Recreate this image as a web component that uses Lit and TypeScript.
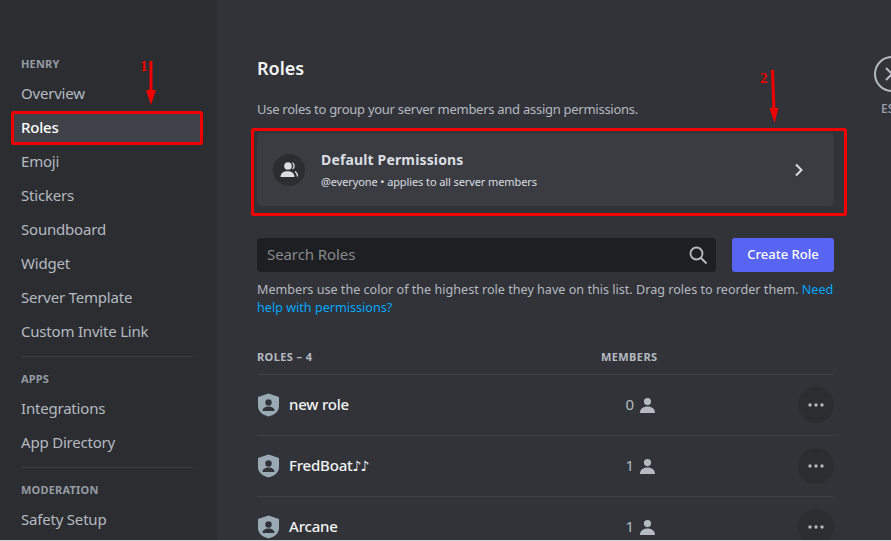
import { LitElement, html, css, svg } from 'lit';
import { customElement } from 'lit/decorators.js';

type NavGroup = { title: string; items: string[] };

const groups: NavGroup[] = [
  { title: 'HENRY', items: ['Overview', 'Roles', 'Emoji', 'Stickers', 'Soundboard', 'Widget', 'Server Template', 'Custom Invite Link'] },
  { title: 'APPS', items: ['Integrations', 'App Directory'] },
  { title: 'MODERATION', items: ['Safety Setup'] },
];

const roles = [
  { name: 'new role', notes: '', count: 0 },
  { name: 'FredBoat', notes: '♪♪', count: 1 },
  { name: 'Arcane', notes: '', count: 1 },
];

const personIcon = svg`<path fill="currentColor" d="M12 3a4.300 4.300 0 1 1 0 8.600A4.300 4.300 0 0 1 12 3ZM3 21c0-5 3.600-7.800 9-7.800s9 2.800 9 7.800Z"/>`;

@customElement('app-root')
export class AppRoot extends LitElement {
  static styles = css`
    :host {
      display: block;
      width: 891px;
      height: 541px;
      position: relative;
      overflow: hidden;
      font-family: 'Noto Sans', 'Open Sans', sans-serif;
      background: #313338;
    }
    .page {
      display: flex;
      height: 540px;
      overflow: hidden;
    }
    .edge {
      height: 1px;
      background: #d4d5d6;
    }
    .sidebar {
      width: 217px;
      flex: none;
      box-sizing: border-box;
      padding: 54px 16px 0 13px;
      background: #2b2d31;
    }
    .group-title {
      height: 20px;
      line-height: 20px;
      padding-left: 8px;
      font-size: 11px;
      font-weight: 700;
      letter-spacing: 0.2px;
      color: #949ba4;
    }
    .nav-item {
      height: 32px;
      line-height: 32px;
      margin-bottom: 2px;
      padding-left: 8px;
      border-radius: 4px;
      font-size: 15px;
      letter-spacing: -0.2px;
      color: #b5bac1;
    }
    .group-title + .nav-item {
      margin-top: 3px;
    }
    .nav-item.active {
      background: #404249;
      color: #fff;
      font-weight: 500;
    }
    .sep {
      height: 1px;
      margin: 9px 8px 12px 8px;
      background: #3c3e44;
    }
    .content {
      width: 577px;
      flex: none;
      margin-left: 40px;
      padding-top: 56px;
    }
    h1 {
      margin: 0;
      height: 25px;
      line-height: 25px;
      font-size: 18px;
      font-weight: 600;
      color: #f2f3f5;
    }
    .desc {
      margin: 18px 0 0;
      height: 20px;
      line-height: 20px;
      font-size: 13px;
      letter-spacing: -0.27px;
      color: #b5bac1;
    }
    .card {
      display: flex;
      align-items: center;
      height: 73px;
      margin-top: 14px;
      padding: 0 16px;
      box-sizing: border-box;
      border-radius: 4px;
      background: #3a3c41;
    }
    .card-icon {
      width: 32px;
      height: 32px;
      border-radius: 50%;
      background: #2b2d31;
      display: flex;
      align-items: center;
      justify-content: center;
      color: #dbdee1;
      margin-right: 16px;
    }
    .card-text {
      flex: 1;
    }
    .card-title {
      height: 20px;
      line-height: 20px;
      font-size: 14px;
      font-weight: 700;
      letter-spacing: 0.15px;
      color: #dbdee1;
    }
    .card-sub {
      margin-top: 4px;
      height: 16px;
      line-height: 16px;
      font-size: 11px;
      letter-spacing: -0.1px;
      color: #dbdee1;
    }
    .chevron {
      color: #dbdee1;
      display: block;
      margin-right: 14px;
    }
    .search-row {
      display: flex;
      gap: 16px;
      margin-top: 32px;
    }
    .search {
      flex: 1;
      height: 34px;
      display: flex;
      align-items: center;
      justify-content: space-between;
      padding: 0 8px 0 10px;
      border-radius: 4px;
      background: #1e1f22;
      font-size: 15px;
      letter-spacing: -0.08px;
      color: #87898c;
    }
    .search span {
      margin-top: -2px;
    }
    .search svg {
      color: #b5bac1;
      display: block;
    }
    .create {
      width: 102px;
      height: 34px;
      line-height: 33px;
      text-align: center;
      border-radius: 3px;
      background: #5865f2;
      color: #fff;
      font-size: 13px;
      font-weight: 500;
    }
    .help {
      margin: 9px 0 0;
      line-height: 18px;
      font-size: 12.6px;
      color: #b5bac1;
    }
    .help a {
      color: #00a8fc;
      text-decoration: none;
    }
    .table-head {
      display: flex;
      align-items: center;
      height: 20px;
      margin-top: 29px;
      padding-bottom: 8px;
      border-bottom: 1px solid #3f4147;
      font-size: 11px;
      font-weight: 700;
      letter-spacing: 0.4px;
      color: #b5bac1;
    }
    .table-head .name,
    .row .name {
      flex: 1;
    }
    .table-head .members {
      width: 57px;
      margin-right: 176px;
    }
    .row {
      display: flex;
      align-items: center;
      height: 60px;
      border-bottom: 1px solid #3f4147;
    }
    .row .name {
      display: flex;
      align-items: center;
      gap: 9px;
      font-size: 15px;
      font-weight: 500;
      letter-spacing: -0.2px;
      color: #f2f3f5;
    }
    .role-label {
      margin-top: -2px;
    }
    .notes {
      font-family: 'DejaVu Sans', sans-serif;
      font-size: 14px;
      letter-spacing: -1px;
      font-weight: 400;
    }
    .shield {
      display: block;
      width: 23px;
      height: 24px;
      color: #99aab5;
    }
    .count {
      display: flex;
      align-items: center;
      justify-content: flex-end;
      gap: 6px;
      width: 58px;
      margin-right: 143px;
      font-size: 15px;
      color: #b5bac1;
    }
    .count span {
      margin-top: -2px;
    }
    .count svg {
      display: block;
      color: #b5bac1;
    }
    .more {
      width: 36px;
      height: 36px;
      flex: none;
      border-radius: 50%;
      background: #2b2d31;
      display: flex;
      align-items: center;
      justify-content: center;
      color: #b5bac1;
    }
    .tools {
      flex: none;
      margin-left: 40px;
      padding-top: 56px;
      width: 36px;
    }
    .close {
      width: 32px;
      height: 32px;
      border: 2px solid #b5bac1;
      border-radius: 50%;
      color: #b5bac1;
      display: flex;
      align-items: center;
      justify-content: center;
    }
    .esc {
      margin-top: 9px;
      padding-left: 7px;
      font-size: 12px;
      line-height: 15px;
      font-weight: 600;
      color: #949ba4;
    }
    .marks {
      position: absolute;
      left: 0;
      top: 0;
      pointer-events: none;
    }
    .marks text {
      font-family: 'Liberation Serif', serif;
      font-size: 15px;
      font-weight: 700;
      fill: #f00000;
    }
  `;

  renderNav() {
    return groups.map((group, i) => html`
      ${i > 0 ? html`<div class="sep"></div>` : ''}
      <div class="group-title">${group.title}</div>
      ${group.items.map(item => html`<div class="nav-item ${item === 'Roles' ? 'active' : ''}">${item}</div>`)}
    `);
  }

  renderRow(role: { name: string; notes: string; count: number }) {
    return html`
      <div class="row">
        <div class="name">
          <svg class="shield" viewBox="0 0 23 24">
            <path fill="currentColor" d="M11.500.5 22 4v9c0 5.500-4.500 9-10.500 10.500C5.500 22 1 18.500 1 13V4Z"/>
            <circle cx="11.500" cy="9.500" r="3.200" fill="#313338"/>
            <path fill="#313338" d="M5.500 18c0-3 2.600-4.500 6-4.500s6 1.500 6 4.500Z"/>
          </svg>
          <span class="role-label">${role.name}<span class="notes">${role.notes}</span></span>
        </div>
        <div class="count">
          <span>${role.count}</span>
          <svg width="15" height="15" viewBox="3 3 18 18">${personIcon}</svg>
        </div>
        <div class="more">
          <svg width="16" height="4" viewBox="0 0 16 4">
            <circle cx="2" cy="2" r="1.700" fill="currentColor"/>
            <circle cx="8" cy="2" r="1.700" fill="currentColor"/>
            <circle cx="14" cy="2" r="1.700" fill="currentColor"/>
          </svg>
        </div>
      </div>
    `;
  }

  render() {
    return html`
      <div class="page">
        <nav class="sidebar">${this.renderNav()}</nav>
        <main class="content">
          <h1>Roles</h1>
          <p class="desc">Use roles to group your server members and assign permissions.</p>
          <div class="card">
            <div class="card-icon">
              <svg width="20" height="20" viewBox="0 0 20 20">
                <circle cx="9" cy="6" r="3.800" fill="currentColor"/>
                <path fill="currentColor" d="M1.500 17c0-3.800 3-5.800 7-5.800s7 2 7 5.800Z"/>
                <path fill="none" stroke="currentColor" stroke-width="1.300" d="M13.500 2.700a4 4 0 0 1 0 6.400M16 11.500c1.500.9 2.500 2.600 2.500 5"/>
              </svg>
            </div>
            <div class="card-text">
              <div class="card-title">Default Permissions</div>
              <div class="card-sub">@everyone • applies to all server members</div>
            </div>
            <svg class="chevron" width="10" height="14" viewBox="0 0 10 14">
              <path fill="none" stroke="currentColor" stroke-width="2" d="M2 1.500 7.500 7 2 12.500"/>
            </svg>
          </div>
          <div class="search-row">
            <div class="search">
              <span>Search Roles</span>
              <svg width="20" height="20" viewBox="0 0 20 20">
                <circle cx="8.500" cy="8.500" r="6" fill="none" stroke="currentColor" stroke-width="1.800"/>
                <path stroke="currentColor" stroke-width="2" d="m13 13 5.500 5.500"/>
              </svg>
            </div>
            <div class="create">Create Role</div>
          </div>
          <p class="help">Members use the color of the highest role they have on this list. Drag roles to reorder them. <a>Need help with permissions?</a></p>
          <div class="table-head">
            <div class="name">ROLES – 4</div>
            <div class="members">MEMBERS</div>
          </div>
          ${roles.map(role => this.renderRow(role))}
        </main>
        <div class="tools">
          <div class="close">
            <svg width="18" height="18" viewBox="0 0 18 18">
              <path stroke="currentColor" stroke-width="2" d="m3 3 12 12M15 3 3 15"/>
            </svg>
          </div>
          <div class="esc">ESC</div>
        </div>
      </div>
      <div class="edge"></div>
      <svg class="marks" width="891" height="541" viewBox="0 0 891 541" fill="none">
        <rect x="12.500" y="112.500" width="189" height="31" rx="1" stroke="#f00000" stroke-width="3"/>
        <rect x="252.500" y="129.500" width="593" height="85" rx="1" stroke="#f00000" stroke-width="3"/>
        <path d="M151 61v36" stroke="#f00000" stroke-width="3"/>
        <path d="M146 90h10l-5 15Z" fill="#f00000"/>
        <text x="140" y="71">1</text>
        <path d="M772.500 70l1.500 42" stroke="#f00000" stroke-width="3"/>
        <path d="M769.500 108h9l-4 15Z" fill="#f00000"/>
        <text x="760" y="83">2</text>
      </svg>
    `;
  }
}
